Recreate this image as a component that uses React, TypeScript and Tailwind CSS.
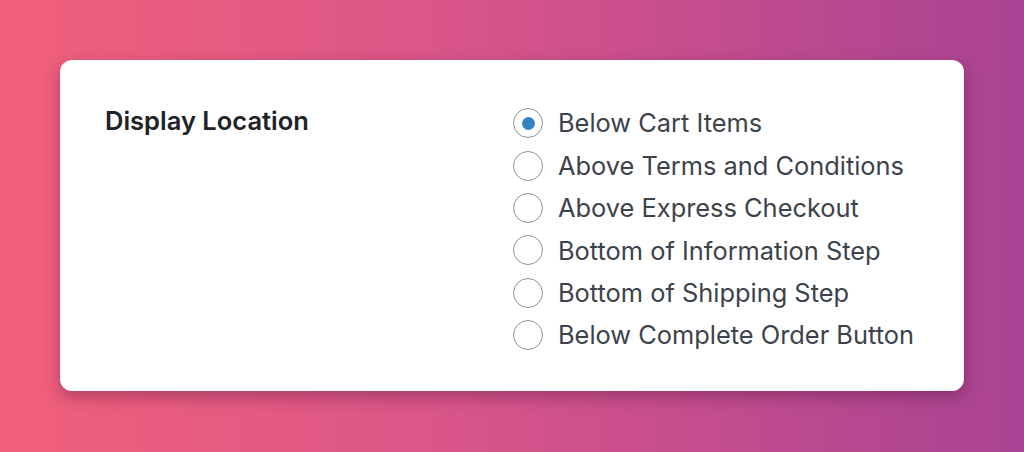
import { useState } from "react";

const OPTIONS = [
  "Below Cart Items",
  "Above Terms and Conditions",
  "Above Express Checkout",
  "Bottom of Information Step",
  "Bottom of Shipping Step",
  "Below Complete Order Button",
];

export default function App() {
  const [selected, setSelected] = useState(OPTIONS[0]);

  return (
    <main
      className="w-[1024px] h-[452px] bg-[linear-gradient(90deg,#f2607a_0%,#d9558a_45%,#a94393_100%)] pt-[60px] pl-[60px]"
      style={{ fontFamily: 'Inter, "Liberation Sans", Arial, sans-serif' }}
    >
      <div className="w-[904px] h-[331px] bg-white rounded-[12px] shadow-[0_6px_16px_rgba(60,10,50,0.35)] flex pl-[45px] pt-[42px]">
        <div className="w-[408px] pt-[4px] text-[25.5px] font-semibold text-[#1d2327] leading-[30px]">
          Display Location
        </div>
        <div className="flex flex-col">
          {OPTIONS.map((opt) => (
            <label
              key={opt}
              className="flex items-center h-[42.4px] cursor-pointer"
              onClick={() => setSelected(opt)}
            >
              <span className="w-[30px] h-[30px] rounded-full border-[1.5px] border-[#8c8f94] flex items-center justify-center shrink-0">
                {selected === opt && <span className="w-[13px] h-[13px] rounded-full bg-[#3582c4]" />}
              </span>
              <span className="ml-[15px] text-[25.4px] text-[#3c434a] leading-none">{opt}</span>
            </label>
          ))}
        </div>
      </div>
    </main>
  );
}
